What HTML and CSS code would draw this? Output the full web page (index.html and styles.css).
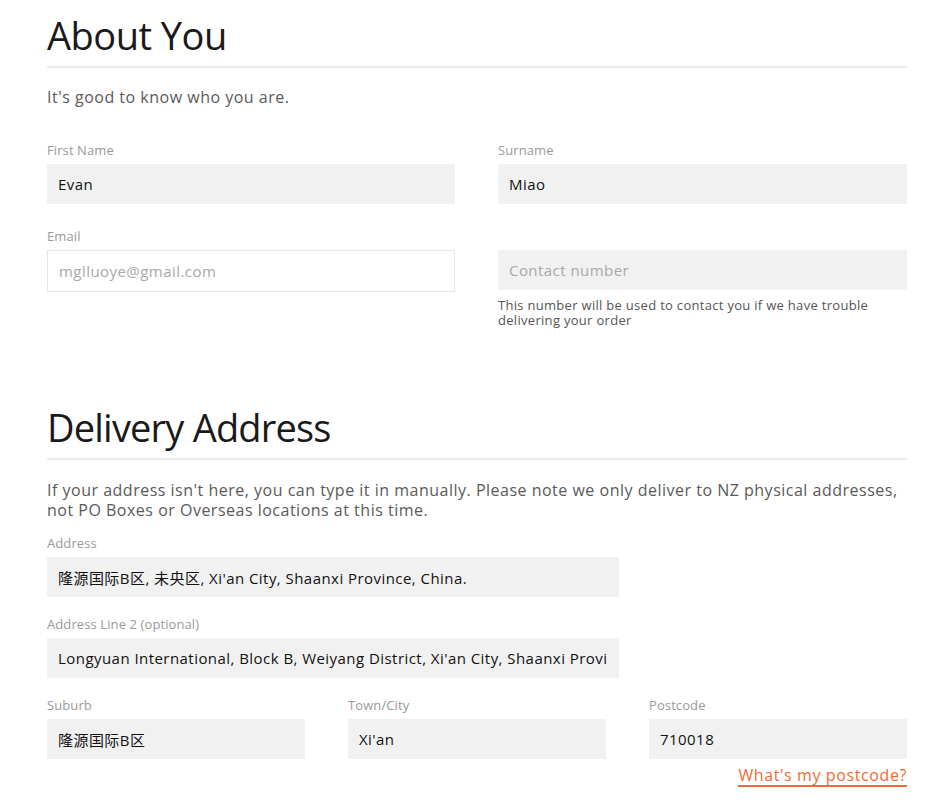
FILE: index.html
```html
<!DOCTYPE html>
<html>
<head>
<meta charset="utf-8">
<link rel="stylesheet" href="styles.css">
</head>
<body>
<div class="page">
  <section class="section about">
    <h1 class="title">About You</h1>
    <p class="intro">It's good to know who you are.</p>
    <div class="grid two">
      <div class="field">
        <label class="label">First Name</label>
        <div class="input filled">Evan</div>
      </div>
      <div class="field">
        <label class="label">Surname</label>
        <div class="input filled">Miao</div>
      </div>
      <div class="field">
        <label class="label">Email</label>
        <div class="input bordered placeholder">mglluoye@gmail.com</div>
      </div>
      <div class="field">
        <label class="label">&nbsp;</label>
        <div class="input filled placeholder">Contact number</div>
        <p class="help">This number will be used to contact you if we have trouble delivering your order</p>
      </div>
    </div>
  </section>

  <section class="section delivery">
    <h1 class="title">Delivery Address</h1>
    <p class="intro">If your address isn't here, you can type it in manually. Please note we only deliver to NZ physical addresses, not PO Boxes or Overseas locations at this time.</p>
    <div class="field wide">
      <label class="label">Address</label>
      <div class="input filled">隆源国际B区, 未央区, Xi'an City, Shaanxi Province, China.</div>
    </div>
    <div class="field wide">
      <label class="label">Address Line 2 (optional)</label>
      <div class="input filled clip"><span class="clipped">Longyuan International, Block B, Weiyang District, Xi'an City, Shaanxi Provi</span></div>
    </div>
    <div class="grid three">
      <div class="field">
        <label class="label">Suburb</label>
        <div class="input filled">隆源国际B区</div>
      </div>
      <div class="field">
        <label class="label">Town/City</label>
        <div class="input filled">Xi'an</div>
      </div>
      <div class="field">
        <label class="label">Postcode</label>
        <div class="input filled">710018</div>
        <div class="linkrow"><a class="link" href="#">What's my postcode?</a></div>
      </div>
    </div>
  </section>
</div>
</body>
</html>
```

FILE: styles.css
```css
* { box-sizing: border-box; }
html, body { margin: 0; padding: 0; background: #fff; }
body {
  font-family: "Open Sans", "Noto Sans CJK SC", sans-serif;
  color: #222;
}
.page {
  width: 860px;
  margin-left: 47px;
  padding-top: 11px;
}
.title {
  margin: 0;
  font-weight: 400;
  font-size: 38px;
  line-height: 48px;
  color: #1a1a1a;
  padding-bottom: 7px;
  border-bottom: 2px solid #ebebeb;
  letter-spacing: -0.5px;
}
.delivery .title { letter-spacing: -0.8px; }
.intro {
  margin: 19px 0 0 0;
  font-size: 16px;
  line-height: 20px;
  letter-spacing: 0.5px;
  color: #5a5a5a;
}
.grid { display: grid; }
.grid.two { grid-template-columns: 408px 409px; column-gap: 43px; row-gap: 0; margin-top: 34px; }
.grid.three { grid-template-columns: 258px 258px 258px; column-gap: 43px; margin-top: 18px; }
.field { display: flex; flex-direction: column; }
.label {
  font-size: 13px;
  line-height: 18px;
  color: #9a9a9a;
  margin-bottom: 5px;
  letter-spacing: 0.1px;
}
.input {
  height: 40px;
  padding: 0 11px;
  display: flex;
  align-items: center;
  font-size: 15px;
  letter-spacing: 0.45px;
  color: #111;
  white-space: nowrap;
  overflow: hidden;
}
.filled { background: #f1f1f1; }
.bordered { background: #fff; border: 1px solid #e6e6e6; height: 42px; }
.placeholder { color: #a8a8a8; }
.grid.two .field { margin-bottom: 23px; }
.help {
  margin: 8px 0 0 0;
  font-size: 13px;
  line-height: 15px;
  letter-spacing: 0.3px;
  color: #555;
}
.delivery { margin-top: 52px; }
.delivery .intro { margin-top: 20px; }
.wide { width: 572px; margin-top: 14px; }
.wide + .wide { margin-top: 18px; }
.linkrow { display: flex; justify-content: flex-end; margin-top: 6px; }
.link {
  font-size: 16px;
  line-height: 20px;
  letter-spacing: 0.6px;
  color: #f26b36;
  text-decoration: none;
  border-bottom: 2px solid #f26b36;
}
```
